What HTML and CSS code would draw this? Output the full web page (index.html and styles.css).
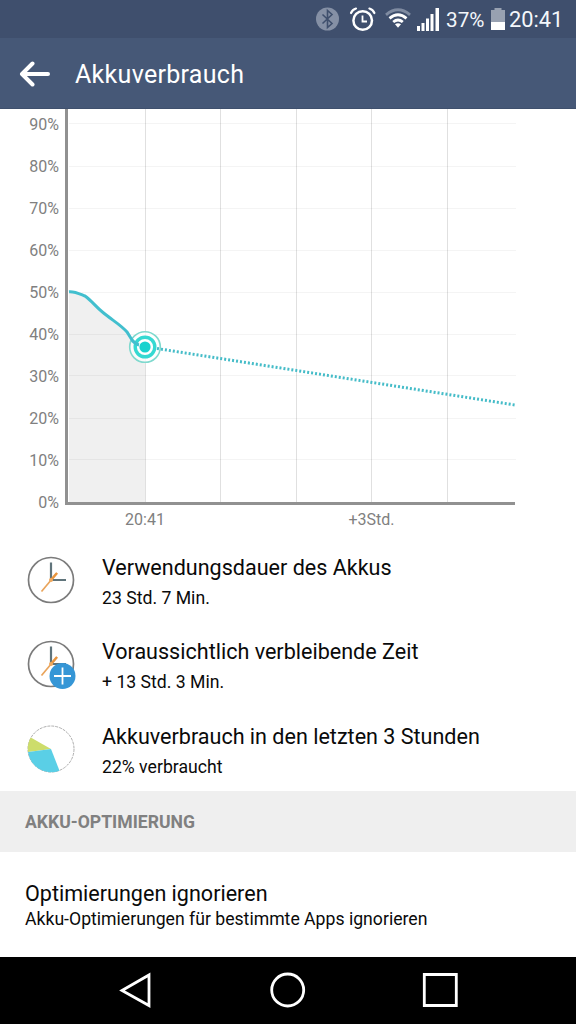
FILE: index.html
```html
<!DOCTYPE html>
<html lang="de">
<head>
<meta charset="utf-8">
<title>Akkuverbrauch</title>
<link rel="stylesheet" href="styles.css">
</head>
<body>
<div class="screen">
  <div class="status">
    <svg class="status-icons" width="124" height="38" viewBox="316 0 124 38">
      <circle cx="327.500" cy="19" r="11.500" fill="#8590a5"/>
      <path d="M322.500 14.500l9.500 9-4.500 4V10.500l4.500 4-9.500 9" fill="none" stroke="#3f4f6d" stroke-width="1.600"/>
      <g fill="none" stroke="#fff" stroke-linecap="round">
        <circle cx="362.700" cy="20.500" r="9.300" stroke-width="2.500"/>
        <path d="M362.500 15.500v6h4.500" stroke-width="1.800" stroke-linecap="butt"/>
        <path d="M351 13q1.500-3.500 5-4.500M374.400 13q-1.500-3.500-5-4.500" stroke-width="2.200"/>
      </g>
      <g fill="none" stroke-width="2.800">
        <path d="M386 14.800q12-10 24 0" stroke="#7f8ba1"/>
        <path d="M389.500 18.300q8.500-7 17 0" stroke="#fff"/>
        <path d="M393.200 22q4.800-4 9.600 0" stroke="#fff"/>
      </g>
      <path d="M395 24.300q3-2.200 6 0l-3 3.500z" fill="#fff"/>
      <path d="M417 26h3v5h-3zM421.500 23h3v8h-3zM426 18.500h3V31h-3zM430.500 14h3v17h-3zM435.500 8h3.500v23h-3.500z" fill="#fff"/>
    </svg>
    <span class="percent">37%</span>
    <svg class="battery" width="14" height="38" viewBox="491 0 14 38">
      <path d="M491 10h3.500V8h7v2h3.500v12h-14z" fill="#98a1b1"/>
      <path d="M491 22h14v8h-14z" fill="#fff"/>
    </svg>
    <span class="time">20:41</span>
  </div>

  <header class="appbar">
    <svg class="back" width="32" height="26" viewBox="0 0 32 26">
      <path d="M13.500 2.500L3 13l10.500 10.500M3.500 13H29" fill="none" stroke="#fff" stroke-width="4" stroke-linecap="round" stroke-linejoin="round"/>
    </svg>
    <h1 class="title">Akkuverbrauch</h1>
  </header>

  <svg class="chart" width="576" height="430" viewBox="0 109 576 430">
    <path class="area" d="M69 291.500C75 291 80 294 85 296C92 301 96 307 103 312.500C112 320 121 325 127 332L132 340Q136 345 145 347V502H69z"/>
    <path class="grid-h" d="M69 123.500H516M69 166.500H516M69 208.500H516M69 250.500H516M69 292.500H516M69 334.500H516M69 375.500H516M69 418.500H516M69 459.500H516"/>
    <path class="grid-v" d="M145.500 109V502M220.500 109V502M296.500 109V502M371.500 109V502M447.500 109V502"/>
    <path class="axis" d="M66.500 109V503.500H515"/>
    <circle cx="145" cy="347" r="15.300" fill="#fff" fill-opacity=".7" stroke="#7fd9ce" stroke-width="1.600"/>
    <circle cx="145" cy="347" r="9.800" fill="#fff" stroke="#35d9d2" stroke-width="3.400"/>
    <path class="used" d="M69 291.700C75 291.200 80 294 85 296C92 301 96 307 103 312.500C112 320 121 325 127 332L132 340Q135 344 139 345"/>
    <path class="forecast" d="M157 348.500L515 405"/>
    <circle cx="145" cy="347" r="5.600" fill="#18d2ce"/>
    <g class="labels y-labels">
      <text x="59" y="130">90%</text><text x="59" y="172">80%</text><text x="59" y="214">70%</text>
      <text x="59" y="256">60%</text><text x="59" y="298">50%</text><text x="59" y="340">40%</text>
      <text x="59" y="382">30%</text><text x="59" y="424">20%</text><text x="59" y="466">10%</text>
      <text x="59" y="508">0%</text>
    </g>
    <g class="labels x-labels"><text x="145" y="525">20:41</text><text x="371.500" y="525">+3Std.</text></g>
  </svg>

  <ul class="stats">
    <li class="stat">
      <svg class="icon" width="50" height="50" viewBox="0 0 50 50">
        <circle cx="25" cy="25" r="22.500" fill="none" stroke="#7b7b7b" stroke-width="1.700"/>
        <path d="M25 7.500V25H40" fill="none" stroke="#60747b" stroke-width="2.200"/>
        <path d="M15.500 36.500L31 18" stroke="#e9a45b" stroke-width="1.700"/><path d="M25 25l6-7" stroke="#e9953e" stroke-width="2.500"/>
        <circle cx="25" cy="25" r="2" fill="#f0a95f"/>
      </svg>
      <div class="text"><div class="name">Verwendungsdauer des Akkus</div><div class="value">23 Std. 7 Min.</div></div>
    </li>
    <li class="stat">
      <svg class="icon" width="50" height="50" viewBox="0 0 50 50">
        <circle cx="25" cy="25" r="22.500" fill="none" stroke="#7b7b7b" stroke-width="1.700"/>
        <path d="M25 7.500V25H40" fill="none" stroke="#60747b" stroke-width="2.200"/>
        <path d="M15.500 36.500L31 18" stroke="#e9a45b" stroke-width="1.700"/><path d="M25 25l6-7" stroke="#e9953e" stroke-width="2.500"/>
        <circle cx="25" cy="25" r="2" fill="#f0a95f"/>
        <circle cx="36.500" cy="37" r="13" fill="#3596d6"/>
        <path d="M36.500 28.500v17M28 37h17" stroke="#fff" stroke-width="1.800"/>
      </svg>
      <div class="text"><div class="name">Voraussichtlich verbleibende Zeit</div><div class="value">+ 13 Std. 3 Min.</div></div>
    </li>
    <li class="stat">
      <svg class="icon" width="50" height="50" viewBox="0 0 50 50">
        <circle cx="25" cy="25" r="23" fill="#fff" stroke="#999" stroke-width=".8" stroke-dasharray="3 1"/>
        <path d="M25 25L4.800 13.500A23.300 23.300 0 0 0 2 28z" fill="#cddd6b"/>
        <path d="M25 25L2 28A23.300 23.300 0 0 0 33.500 46.700z" fill="#5acfe6"/>
      </svg>
      <div class="text"><div class="name">Akkuverbrauch in den letzten 3 Stunden</div><div class="value">22% verbraucht</div></div>
    </li>
  </ul>

  <h2 class="section">AKKU-OPTIMIERUNG</h2>
  <div class="option">
    <div class="name">Optimierungen ignorieren</div>
    <div class="value">Akku-Optimierungen für bestimmte Apps ignorieren</div>
  </div>

  <nav class="navbar">
    <svg width="34" height="38" viewBox="118 971 34 38"><path d="M122 990.500L149 975V1005.500z"/></svg>
    <svg width="38" height="38" viewBox="268 971 38 38"><circle cx="287.700" cy="990" r="16"/></svg>
    <svg width="38" height="38" viewBox="421 971 38 38"><path d="M424.300 974.500h32v31h-32z"/></svg>
  </nav>
</div>
</body>
</html>
```
FILE: styles.css
```css
* { box-sizing: border-box; }
body { margin: 0; background: #fff; font-family: Roboto, sans-serif; color: #0a0a0a; }
svg { display: block; flex: none; }
.screen { width: 576px; height: 1024px; display: flex; flex-direction: column; overflow: hidden; }
.status { height: 38px; flex: none; display: flex; padding-left: 316px; background: #3f4f6d; color: #f4f7fb; font-size: 21.800px; line-height: 40px; white-space: nowrap; }
.percent { width: 45px; padding-left: 6px; margin-right: 6px; font-size: 20.700px; }
.time { padding-left: 4px; }
.appbar { height: 71px; flex: none; display: flex; align-items: center; padding-left: 19px; background: #465877; border-bottom: 1px solid #3f506d; color: #fff; }
.back { margin-top: 1px; }
.title { margin: 4px 0 0 24px; font-size: 25px; font-weight: 400; letter-spacing: .3px; line-height: 30px; }
.chart { height: 430px; }
.area { fill: #f0f0f0; }
.grid-h { stroke: #000; stroke-opacity: .045; }
.grid-v { stroke: #000; stroke-opacity: .12; }
.axis { fill: none; stroke: #919191; stroke-width: 3; }
.used { fill: none; stroke: #42bfce; stroke-width: 3; }
.forecast { fill: none; stroke: #45bcc8; stroke-width: 3; stroke-dasharray: 2 2; }
.labels { fill: #808080; font-size: 16px; }
.y-labels { text-anchor: end; }
.x-labels { text-anchor: middle; }
.stats { margin: 0; padding: 13px 0 0 26px; height: 252px; flex: none; list-style: none; }
.stat { display: flex; height: 84.300px; }
.icon { margin-top: 3px; }
.text { padding-left: 26px; }
.name { font-size: 21.550px; line-height: 31px; white-space: nowrap; }
.value { font-size: 17.650px; line-height: 24px; white-space: nowrap; }
.text .value { margin-top: 3px; }
.section { margin: 0; height: 61px; flex: none; padding-left: 25px; background: #efefef; color: #808080; font-size: 17.600px; font-weight: 700; line-height: 63px; }
.option { flex: 1; padding: 26px 0 0 25px; }
.option .value { margin-top: -2px; }
.navbar { height: 67px; flex: none; display: flex; align-items: center; justify-content: space-between; padding: 0 117px 1px 118px; background: #000; }
.navbar svg { fill: none; stroke: #fff; stroke-width: 2.800; }
```
